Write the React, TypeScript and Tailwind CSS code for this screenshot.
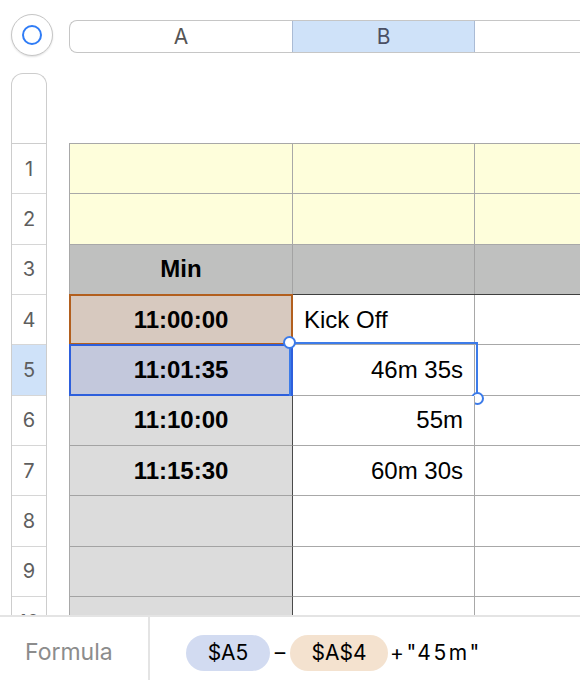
const rows = [1, 2, 3, 4, 5, 6, 7, 8, 9, 10];

type Cell = { text?: string; align?: "left" | "center" | "right"; bold?: boolean };

const body: Record<number, [Cell, Cell]> = {
  4: [{ text: "11:00:00", align: "center", bold: true }, { text: "Kick Off", align: "left" }],
  5: [{ text: "11:01:35", align: "center", bold: true }, { text: "46m 35s", align: "right" }],
  6: [{ text: "11:10:00", align: "center", bold: true }, { text: "55m", align: "right" }],
  7: [{ text: "11:15:30", align: "center", bold: true }, { text: "60m 30s", align: "right" }],
};

function Row({ n }: { n: number }) {
  if (n <= 2) {
    return (
      <div className="flex h-[50.33px]">
        <div className="w-[223px] shrink-0 border-r border-b border-[#a8a8a8] bg-[#fefedb]" />
        <div className="w-[182px] shrink-0 border-r border-b border-[#a8a8a8] bg-[#fefedb]" />
        <div className="flex-1 border-b border-[#a8a8a8] bg-[#fefedb]" />
      </div>
    );
  }
  if (n === 3) {
    return (
      <div className="flex h-[50.33px] border-b border-[#3f3f3f] bg-[#bfc0bf]">
        <div className="w-[223px] shrink-0 border-r border-[#a3a3a3] flex items-center justify-center font-bold text-[24px] text-black">
          Min
        </div>
        <div className="w-[182px] shrink-0 border-r border-[#a3a3a3]" />
        <div className="flex-1" />
      </div>
    );
  }
  const cells = body[n];
  const a = cells?.[0];
  const b = cells?.[1];
  return (
    <div className="flex h-[50.33px]">
      <div
        className={`relative w-[223px] shrink-0 border-r border-b border-r-[#4a4a4a] border-b-[#a3a3a3] flex items-center justify-center text-[24px] font-bold text-black ${
          n === 4 ? "bg-[#d7c9bf]" : n === 5 ? "bg-[#c3c8dc]" : "bg-[#dcdcdc]"
        }`}
      >
        {a?.text}
        {n === 4 && <div className="absolute -left-px -top-px -right-px -bottom-px border-2 border-[#b25f1e]" />}
        {n === 5 && <div className="absolute -left-px -top-px -right-px -bottom-px border-2 border-[#2d5fdc]" />}
      </div>
      <div
        className={`relative w-[182px] shrink-0 border-r border-b border-[#a8a8a8] bg-white flex items-center text-[24px] text-black px-[11px] ${
          b?.align === "right" ? "justify-end" : "justify-start"
        }`}
      >
        {b?.text}
        {n === 5 && (
          <div className="absolute -left-[4px] -top-[3px] -right-[4px] -bottom-[4px] border-2 border-[#3c7be9]">
            <div className="absolute -left-[8px] -top-[8px] w-[13px] h-[13px] rounded-full bg-white border-2 border-[#3c7be9]" />
            <div className="absolute -right-[8px] -bottom-[8px] w-[13px] h-[13px] rounded-full bg-white border-2 border-[#3c7be9]" />
          </div>
        )}
      </div>
      <div className="flex-1 border-b border-[#a8a8a8] bg-white" />
    </div>
  );
}

export default function App() {
  return (
    <div className="w-[580px] h-[680px] overflow-hidden flex flex-col bg-white font-['Liberation_Sans',Arial,sans-serif]">
      <div className="flex-1 overflow-hidden">
        {/* top bar */}
        <div className="flex items-start h-[73px] pl-[11px]">
          <div className="mt-[14px] w-[42px] h-[42px] shrink-0 rounded-full border border-[#c6c6c6] bg-white shadow-[0_1px_2px_rgba(0,0,0,0.12)] flex items-center justify-center">
            <div className="w-[20px] h-[20px] rounded-full border-[2.5px] border-[#2f7cf6]" />
          </div>
          <div className="ml-[16px] mt-[20px] flex-1 h-[33px] flex rounded-l-lg border border-r-0 border-[#c6c6c6] overflow-hidden font-['Inter',sans-serif] text-[21px] text-[#555]">
            <div className="w-[222px] shrink-0 flex items-center justify-center">A</div>
            <div className="w-[183px] shrink-0 flex items-center justify-center bg-[#cfe2f9] border-x border-[#aabbd5] text-[#4b5064]">
              B
            </div>
            <div className="flex-1" />
          </div>
        </div>

        <div className="flex pl-[11px]">
          {/* row headers */}
          <div className="w-[36px] shrink-0 rounded-t-xl border-x border-t border-[#cdcdcd] font-['Inter',sans-serif] text-[20px] text-[#5e5e5e]">
            <div className="h-[70px] border-b border-[#cdcdcd]" />
            {rows.map((n) => (
              <div
                key={n}
                className={`h-[50.33px] border-b border-[#d6d6d6] flex items-center justify-center ${
                  n === 5 ? "bg-[#cfe2f9]" : ""
                }`}
              >
                {n}
              </div>
            ))}
          </div>

          {/* sheet */}
          <div className="ml-[22px] mt-[70px] flex-1 border-t border-l border-[#a8a8a8]">
            {rows.map((n) => (
              <Row key={n} n={n} />
            ))}
          </div>
        </div>
      </div>

      {/* formula bar */}
      <div className="h-[65px] shrink-0 border-t-2 border-[#e4e4e4] bg-white flex font-['Inter',sans-serif]">
        <div className="w-[150px] shrink-0 border-r-2 border-[#e4e4e4] flex items-center pl-[25px] pt-[8px] text-[23px] text-[#8c8c8c]">
          Formula
        </div>
        <div className="flex items-center pl-[36px] pt-[8px] text-[21px] text-black">
          <span className="w-[84px] h-[36px] rounded-full bg-[#d2dbf1] flex items-center justify-center">$A5</span>
          <span className="w-[20px] text-center">–</span>
          <span className="w-[98px] h-[36px] rounded-full bg-[#f4e2cf] flex items-center justify-center">$A$4</span>
          <span className="ml-[2px] tracking-[2.5px]">+"45m"</span>
        </div>
      </div>
    </div>
  );
}
